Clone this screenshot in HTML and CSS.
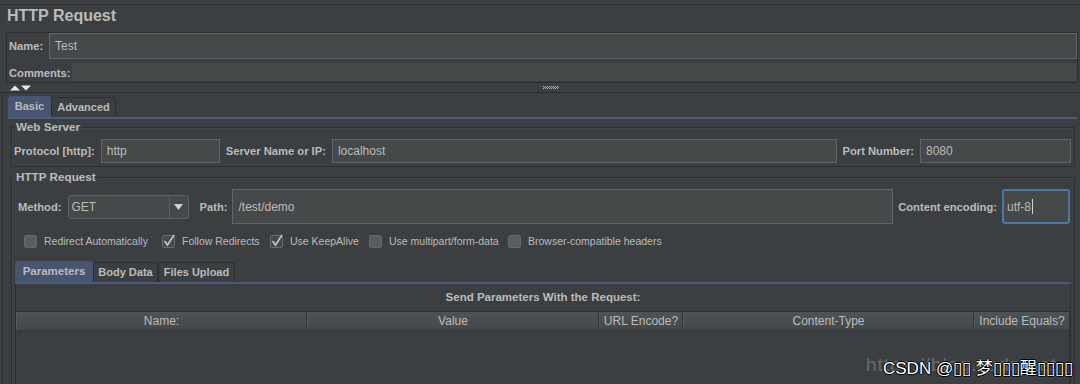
FILE: index.html
```html
<!DOCTYPE html>
<html>
<head>
<meta charset="utf-8">
<title>HTTP Request</title>
<link rel="stylesheet" href="styles.css">
</head>
<body>
<div class="topbar"></div>
<h1 class="title">HTTP Request</h1>

<div class="namepanel">
  <div class="name-row">
    <span class="lbl name-lbl">Name:</span>
    <div class="field name-field">Test</div>
  </div>
  <div class="comments-row">
    <span class="lbl comments-lbl">Comments:</span>
    <div class="comments-field"></div>
  </div>
</div>

<div class="splitter">
  <svg class="arrows" width="22" height="6" viewBox="0 0 22 6">
    <polygon points="0,5.5 5,0.5 10,5.5" fill="#e6e6e6"/>
    <polygon points="11,0.5 21,0.5 16,5.5" fill="#e6e6e6"/>
  </svg>
  <svg class="grip" width="16" height="5" viewBox="0 0 16 5">
    <g fill="#b0b0b0">
      <rect x="0" y="1" width="1" height="1"/><rect x="2" y="1" width="1" height="1"/><rect x="4" y="1" width="1" height="1"/><rect x="6" y="1" width="1" height="1"/><rect x="8" y="1" width="1" height="1"/><rect x="10" y="1" width="1" height="1"/><rect x="12" y="1" width="1" height="1"/><rect x="14" y="1" width="1" height="1"/>
      <rect x="1" y="2" width="1" height="1"/><rect x="3" y="2" width="1" height="1"/><rect x="5" y="2" width="1" height="1"/><rect x="7" y="2" width="1" height="1"/><rect x="9" y="2" width="1" height="1"/><rect x="11" y="2" width="1" height="1"/><rect x="13" y="2" width="1" height="1"/><rect x="15" y="2" width="1" height="1"/>
      <rect x="0" y="3" width="1" height="1"/><rect x="2" y="3" width="1" height="1"/><rect x="4" y="3" width="1" height="1"/><rect x="6" y="3" width="1" height="1"/><rect x="8" y="3" width="1" height="1"/><rect x="10" y="3" width="1" height="1"/><rect x="12" y="3" width="1" height="1"/><rect x="14" y="3" width="1" height="1"/>
    </g>
  </svg>
</div>

<div class="tabpane">
  <div class="tabstrip main-tabs">
    <div class="tab active tab-basic">Basic</div>
    <div class="tab tab-adv">Advanced</div>
  </div>
  <div class="tabcontent">
    <fieldset class="group web">
      <legend>Web Server</legend>
      <div class="server-row">
        <span class="lbl">Protocol [http]:</span>
        <div class="field proto-field">http</div>
        <span class="lbl">Server Name or IP:</span>
        <div class="field host-field">localhost</div>
        <span class="lbl">Port Number:</span>
        <div class="field port-field">8080</div>
      </div>
    </fieldset>

    <fieldset class="group req">
      <legend>HTTP Request</legend>
      <div class="method-row">
        <span class="lbl method-lbl">Method:</span>
        <div class="combo">
          <span class="combo-val">GET</span>
          <span class="combo-btn"><svg width="9" height="6" viewBox="0 0 9 6"><polygon points="0,0 9,0 4.5,6" fill="#d0d0d0"/></svg></span>
        </div>
        <span class="lbl path-lbl">Path:</span>
        <div class="field path-field">/test/demo</div>
        <span class="lbl">Content encoding:</span>
        <div class="field enc-field">utf-8<span class="caret"></span></div>
      </div>

      <div class="checks">
        <label class="chk chk-redirect">
          <svg class="box" width="13" height="13" viewBox="0 0 13 13"><rect x="0.5" y="0.5" width="12" height="12" rx="1.5" fill="#5a5d60" stroke="#66696b"/></svg>
          <span>Redirect Automatically</span>
        </label>
        <label class="chk chk-follow">
          <svg class="box" width="13" height="13" viewBox="0 0 13 13"><rect x="0.5" y="0.5" width="12" height="12" rx="1.5" fill="#45494b" stroke="#6a6d70"/><polyline points="2.5,6 5.5,10 12,0" fill="none" stroke="#c6c6c6" stroke-width="1.6"/></svg>
          <span>Follow Redirects</span>
        </label>
        <label class="chk chk-keep">
          <svg class="box" width="13" height="13" viewBox="0 0 13 13"><rect x="0.5" y="0.5" width="12" height="12" rx="1.5" fill="#45494b" stroke="#6a6d70"/><polyline points="2.5,6 5.5,10 12,0" fill="none" stroke="#c6c6c6" stroke-width="1.6"/></svg>
          <span>Use KeepAlive</span>
        </label>
        <label class="chk chk-multi">
          <svg class="box" width="13" height="13" viewBox="0 0 13 13"><rect x="0.5" y="0.5" width="12" height="12" rx="1.5" fill="#5a5d60" stroke="#66696b"/></svg>
          <span>Use multipart/form-data</span>
        </label>
        <label class="chk">
          <svg class="box" width="13" height="13" viewBox="0 0 13 13"><rect x="0.5" y="0.5" width="12" height="12" rx="1.5" fill="#5a5d60" stroke="#66696b"/></svg>
          <span>Browser-compatible headers</span>
        </label>
      </div>

      <div class="tabstrip sub-tabs">
        <div class="tab active tab-params">Parameters</div>
        <div class="tab tab-body">Body Data</div>
        <div class="tab tab-files">Files Upload</div>
      </div>

      <div class="params">
        <div class="params-title">Send Parameters With the Request:</div>
        <div class="thead">
          <div class="th">Name:</div>
          <div class="th">Value</div>
          <div class="th">URL Encode?</div>
          <div class="th">Content-Type</div>
          <div class="th">Include Equals?</div>
        </div>
        <div class="tbody"></div>
      </div>
    </fieldset>
  </div>
</div>

<div class="watermark">
  <span class="wm-url">https://blog.csdn.net</span>
  <span class="wm-csdn">CSDN @▯▯ 梦▯▯▯醒▯▯▯▯</span>
</div>
</body>
</html>
```

FILE: styles.css
```css
* { box-sizing: border-box; }

html, body { margin: 0; padding: 0; }

body {
  width: 1080px;
  height: 384px;
  overflow: hidden;
  position: relative;
  background: #3c3f41;
  color: #bbbbbb;
  font-family: "Liberation Sans", Arial, sans-serif;
  font-size: 11px;
}

.topbar {
  height: 5px;
  border-bottom: 1px solid #2b2d2f;
}

.title {
  margin: 0;
  height: 27px;
  padding-left: 7px;
  font-size: 16px;
  font-weight: bold;
  line-height: 22px;
  color: #bbbbbb;
}

.lbl {
  font-weight: bold;
  font-size: 11.2px;
  color: #bbbbbb;
  white-space: nowrap;
}

.field {
  background: #45494a;
  border: 1px solid #626567;
  font-size: 12px;
  color: #bbbbbb;
  padding-left: 5px;
  display: flex;
  align-items: center;
  white-space: nowrap;
}

/* name / comments */
.namepanel {
  margin: 0 2px 0 6px;
  border: 1px solid #2b2d2f;
  height: 51px;
}

.name-row {
  display: flex;
  align-items: center;
  height: 26px;
}

.name-lbl {
  width: 42px;
  padding-left: 2px;
}

.name-field {
  flex: 1;
  height: 26px;
}

.comments-row {
  display: flex;
  align-items: flex-end;
  height: 23px;
}

.comments-lbl {
  width: 65px;
  padding-left: 2px;
  align-self: center;
  padding-top: 4px;
}

.comments-field {
  flex: 1;
  height: 19px;
  background: #45494a;
  border-bottom: 1px solid #393c3e;
}

/* splitter */
.splitter {
  height: 10px;
  border-bottom: 1px solid #2b2d2f;
  display: flex;
  align-items: flex-start;
  padding-left: 10px;
}

.arrows {
  display: block;
  margin-top: 2px;
}

.grip {
  display: block;
  margin-left: 511px;
  margin-top: 2px;
}

/* tabbed pane */
.tabpane {
  margin-left: 2px;
  border-left: 1px solid #2b2d2f;
  height: 291px;
  padding: 0 3px 0 5px;
}

.tabstrip {
  display: flex;
  align-items: flex-end;
  border-bottom: 2px solid #4a5a7c;
}

.main-tabs {
  height: 26px;
}

.tab {
  height: 20px;
  border: 1px solid #2b2d2f;
  border-bottom: none;
  border-radius: 3px 3px 0 0;
  font-weight: bold;
  font-size: 11px;
  line-height: 19px;
  text-align: center;
  color: #bbbbbb;
  background: #3c3f41;
  white-space: nowrap;
}

.tab.active {
  height: 21px;
  background: #475571;
  border-color: #475571;
  line-height: 18px;
}

.tab-basic { width: 43px; }
.tab-adv { width: 65px; }
.tab-params { width: 78px; font-size: 11.5px; }
.tab-body { width: 65px; }
.tab-files { width: 77px; }

.tabcontent {
  padding: 2px 2px 0 3px;
}

/* titled groups */
.group {
  margin: 0;
  min-width: 0;
  border: 1px solid #2d2f31;
  box-shadow: inset 1px 1px 0 #444749;
}

.group legend {
  padding: 0 2px;
  font-weight: bold;
  font-size: 11.7px;
  line-height: 12px;
  color: #bbbbbb;
}

.web {
  padding: 6px 3px 3px 2px;
}

.server-row {
  display: flex;
  align-items: center;
  gap: 6px;
  height: 24px;
}

.server-row .field { height: 24px; }
.proto-field { width: 119px; }
.host-field { flex: 1; }
.port-field { width: 151px; }

.req {
  margin-top: 4px;
  padding: 6px 3px 0 3px;
  height: 214px;
  border-bottom: none;
}

.req legend {
  margin-left: -1px;
}

.method-row {
  display: flex;
  align-items: center;
  gap: 5px;
  height: 35px;
  padding-left: 3px;
  padding-right: 1px;
}

.method-lbl { margin-right: 1px; }

.combo {
  width: 121px;
  height: 24px;
  display: flex;
  background: #45494a;
  border: 1px solid #5e6163;
  border-radius: 3px;
  font-size: 12px;
}

.combo-val {
  flex: 1;
  padding-left: 3px;
  display: flex;
  align-items: center;
}

.combo-btn {
  width: 19px;
  border-left: 1px solid #5e6163;
  display: flex;
  align-items: center;
  justify-content: center;
}

.combo-btn svg { display: block; }

.path-lbl { margin-left: 6px; }

.path-field {
  flex: 1;
  height: 35px;
}

.enc-field {
  width: 68px;
  height: 35px;
  border: 2px solid #4a76a8;
  border-radius: 3px;
  padding-left: 3px;
}

.caret {
  display: inline-block;
  width: 1px;
  height: 15px;
  background: #d0d0d0;
  margin-left: 1px;
}

/* checkboxes */
.checks {
  display: flex;
  align-items: center;
  height: 14px;
  margin-top: 10px;
  padding-left: 9px;
}

.chk {
  display: flex;
  align-items: center;
  gap: 7px;
  font-size: 10.5px;
  color: #bbbbbb;
  white-space: nowrap;
}

.chk-redirect { width: 138px; }
.chk-follow { width: 108px; }
.chk-keep { width: 99px; }
.chk-multi { width: 139px; }

.chk .box {
  display: block;
  overflow: visible;
  flex: none;
}

/* sub tabs */
.sub-tabs {
  margin-top: 13px;
  height: 23px;
}

.params {
  border-left: 1px solid #2d2f31;
  border-right: 1px solid #2d2f31;
  height: 100px;
}

.params-title {
  height: 27px;
  line-height: 27px;
  text-align: center;
  font-weight: bold;
  font-size: 11.5px;
}

.thead {
  display: grid;
  grid-template-columns: 291px 292px 84px 291px 96px;
  border-top: 1px solid #2b2d2f;
  border-bottom: 1px solid #343638;
  height: 20px;
}

.th {
  background: linear-gradient(#505356, #45484a);
  border-right: 1px solid #333537;
  border-left: 1px solid #56595b;
  font-size: 12px;
  line-height: 18px;
  text-align: center;
  color: #bbbbbb;
  white-space: nowrap;
}

.tbody {
  height: 60px;
  border-right: 1px solid #2d2f31;
  width: 1054px;
}

/* watermark overlay */
.watermark {
  position: absolute;
  left: 866px;
  top: 352px;
  width: 210px;
  height: 26px;
}

.wm-url {
  position: absolute;
  left: 0;
  top: 2px;
  font-size: 19px;
  color: rgba(140, 140, 140, 0.6);
  white-space: nowrap;
  letter-spacing: 1px;
}

.wm-csdn {
  position: absolute;
  left: 17px;
  top: 2px;
  font-family: "Liberation Sans", "Noto Sans CJK SC", sans-serif;
  font-size: 17px;
  color: #ffffff;
  white-space: nowrap;
  text-shadow: -1px 0 #000, 1px 0 #000, 0 -1px #000, 0 1px #000;
}
```
